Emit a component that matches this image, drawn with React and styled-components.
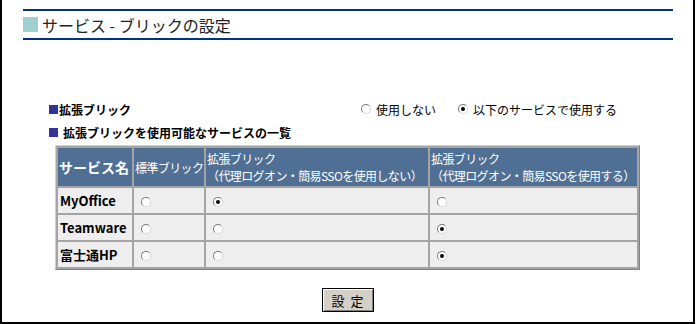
import styled, { createGlobalStyle } from "styled-components";
import { useState } from "react";

const GlobalStyle = createGlobalStyle`
  body {
    margin: 0;
    background: #ffffff;
    font-family: "Noto Sans CJK JP", "Liberation Sans", sans-serif;
  }
`;

const Frame = styled.div`
  box-sizing: border-box;
  width: 695px;
  height: 324px;
  border: 2px solid #000000;
  border-top: none;
  padding: 9px 0 0 21px;
`;

const TitleBar = styled.div`
  width: 650px;
  height: 27px;
  border-top: 2px solid #003384;
  border-bottom: 2px solid #003384;
  display: flex;
  align-items: center;
  gap: 4px;
`;

const TitleMark = styled.span`
  width: 15px;
  height: 15px;
  background: #9fcfcf;
`;

const TitleText = styled.h1`
  margin: 0;
  font-size: 16px;
  font-weight: normal;
  color: #222222;
  line-height: 1;
`;

const Body = styled.div`
  margin: 60px 0 0 26px;
  width: 600px;
`;

const OptionRow = styled.div`
  display: flex;
  align-items: center;
  height: 18px;
`;

const SectionLabel = styled.div`
  display: flex;
  align-items: center;
  gap: ${(p) => p.$gap}px;
  width: ${(p) => (p.$width ? `${p.$width}px` : "auto")};
  font-size: 12px;
  font-weight: bold;
  color: #000000;
  margin-top: ${(p) => p.$top || 0}px;
`;

const Mark = styled.span`
  width: 9px;
  height: 9px;
  background: #333399;
`;

const RadioLabel = styled.label`
  display: flex;
  align-items: center;
  gap: 5px;
  font-size: 12px;
  color: #000000;
  margin-right: 22px;
  cursor: pointer;
`;

const Radio = styled.span`
  box-sizing: border-box;
  display: inline-flex;
  vertical-align: middle;
  align-items: center;
  justify-content: center;
  width: 10px;
  height: 10px;
  border-radius: 50%;
  border: 1px solid #7a7a7a;
  border-right-color: #d8d8d8;
  border-bottom-color: #d8d8d8;
  background: #ffffff;
  cursor: pointer;

  &::after {
    content: "";
    width: 4px;
    height: 4px;
    border-radius: 50%;
    background: ${(p) => (p.$on ? "#000000" : "transparent")};
  }
`;

const Table = styled.table`
  margin: 4px 0 0 6px;
  table-layout: fixed;
  width: 585px;
  border-collapse: separate;
  border-spacing: 2px;
  background: #a4a4a4;
  border: 1px solid;
  border-color: #d4d0c8 #808080 #808080 #d4d0c8;
  font-size: 12px;
`;

const Th = styled.th`
  box-sizing: border-box;
  background: #4f7094;
  color: #ffffff;
  font-weight: ${(p) => (p.$bold ? "bold" : "normal")};
  font-size: ${(p) => (p.$bold ? "14px" : "12px")};
  letter-spacing: ${(p) => (p.$bold ? "0" : "-0.6px")};
  text-align: left;
  padding: 1px 0 1px 1px;
  height: 38px;
  line-height: 17px;
  white-space: nowrap;
`;

const Td = styled.td`
  background: #eeeeee;
  height: 25px;
  padding: 0 4px 0 ${(p) => (p.$bold ? 2 : 7)}px;
  font-weight: ${(p) => (p.$bold ? "bold" : "normal")};
  font-size: 13px;
  color: #000000;
  vertical-align: middle;
`;

const ButtonRow = styled.div`
  display: flex;
  justify-content: center;
  margin: 18px 0 0 6px;
  width: 585px;
`;

const SubmitButton = styled.button`
  box-sizing: border-box;
  width: 52px;
  height: 24px;
  background: #d4d0c8;
  border: 1px solid #000000;
  box-shadow: inset 1px 1px 0 #ffffff, inset -1px -1px 0 #808080;
  font-family: inherit;
  font-size: 13px;
  letter-spacing: 6px;
  padding: 0 0 0 6px;
  color: #000000;
`;

const services = ["MyOffice", "Teamware", "富士通HP"];

const App = () => {
  const [mode, setMode] = useState("use");
  const [choice, setChoice] = useState({
    MyOffice: 1,
    Teamware: 2,
    富士通HP: 2,
  });

  return (
    <>
      <GlobalStyle />
      <Frame>
        <TitleBar>
          <TitleMark />
          <TitleText>サービス - ブリックの設定</TitleText>
        </TitleBar>

        <Body>
          <OptionRow>
            <SectionLabel $width={312} $gap={1}>
              <Mark />
              拡張ブリック
            </SectionLabel>
            <RadioLabel onClick={() => setMode("none")}>
              <Radio $on={mode === "none"} />
              使用しない
            </RadioLabel>
            <RadioLabel onClick={() => setMode("use")}>
              <Radio $on={mode === "use"} />
              以下のサービスで使用する
            </RadioLabel>
          </OptionRow>

          <SectionLabel $gap={5} $top={6}>
            <Mark />
            拡張ブリックを使用可能なサービスの一覧
          </SectionLabel>

          <Table>
            <colgroup>
              <col style={{ width: 74 }} />
              <col style={{ width: 70 }} />
              <col style={{ width: 222 }} />
              <col />
            </colgroup>
            <thead>
              <tr>
                <Th $bold>サービス名</Th>
                <Th>標準ブリック</Th>
                <Th>
                  拡張ブリック
                  <br />
                  （代理ログオン・簡易SSOを使用しない）
                </Th>
                <Th>
                  拡張ブリック
                  <br />
                  （代理ログオン・簡易SSOを使用する）
                </Th>
              </tr>
            </thead>
            <tbody>
              {services.map((name) => (
                <tr key={name}>
                  <Td $bold>{name}</Td>
                  {[0, 1, 2].map((i) => (
                    <Td key={i}>
                      <Radio
                        $on={choice[name] === i}
                        onClick={() => setChoice({ ...choice, [name]: i })}
                      />
                    </Td>
                  ))}
                </tr>
              ))}
            </tbody>
          </Table>

          <ButtonRow>
            <SubmitButton>設定</SubmitButton>
          </ButtonRow>
        </Body>
      </Frame>
    </>
  );
};

export default App;
